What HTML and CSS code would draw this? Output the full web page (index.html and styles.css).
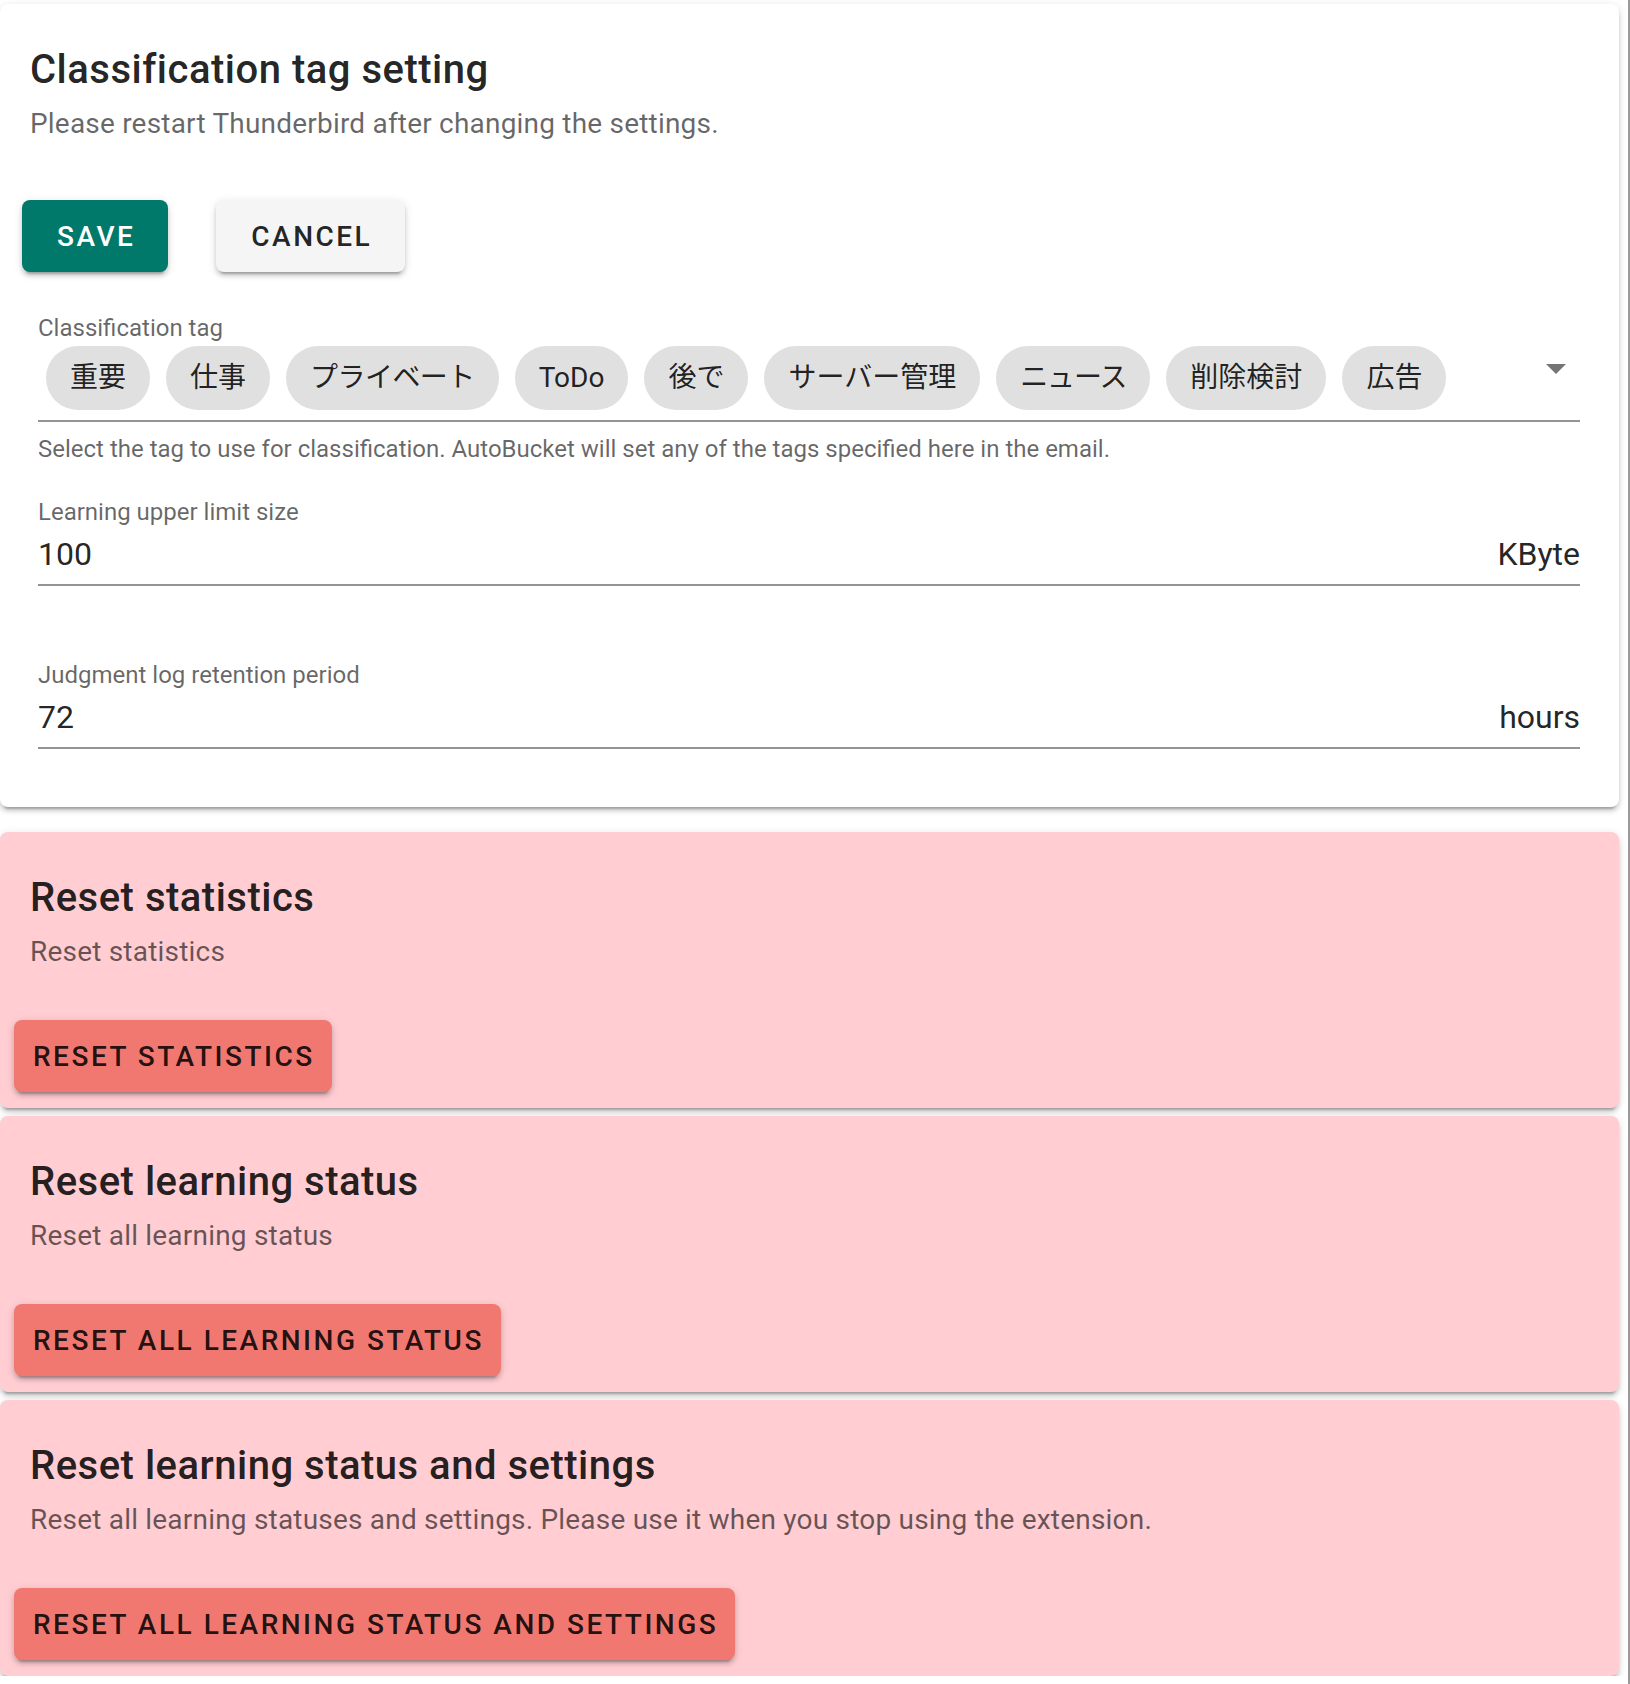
FILE: index.html
```html
<!DOCTYPE html>
<html lang="en">
<head>
<meta charset="utf-8">
<title>AutoBucket settings</title>
<link rel="stylesheet" href="styles.css">
</head>
<body>
<main class="page">
  <section class="card card-main">
    <h2 class="card-title">Classification tag setting</h2>
    <p class="card-subtitle">Please restart Thunderbird after changing the settings.</p>
    <div class="actions actions-main">
      <button class="btn btn-save">Save</button>
      <button class="btn btn-cancel">Cancel</button>
    </div>
    <div class="fields">
      <div class="field field-select">
        <label class="field-label">Classification tag</label>
        <div class="select-row">
          <div class="chips">
            <span class="chip">重要</span>
            <span class="chip">仕事</span>
            <span class="chip chip-kana">プライベート</span>
            <span class="chip">ToDo</span>
            <span class="chip">後で</span>
            <span class="chip">サーバー管理</span>
            <span class="chip chip-kana-tight">ニュース</span>
            <span class="chip">削除検討</span>
            <span class="chip">広告</span>
          </div>
          <svg class="arrow" width="48" height="48" viewBox="0 0 24 24"><path d="M7 10l5 5 5-5z"/></svg>
        </div>
        <div class="underline"></div>
        <p class="hint">Select the tag to use for classification. AutoBucket will set any of the tags specified here in the email.</p>
      </div>
      <div class="field field-text field-first">
        <label class="field-label">Learning upper limit size</label>
        <div class="value-row"><span class="value">100</span><span class="suffix">KByte</span></div>
        <div class="underline"></div>
      </div>
      <div class="field field-text field-second">
        <label class="field-label">Judgment log retention period</label>
        <div class="value-row"><span class="value">72</span><span class="suffix">hours</span></div>
        <div class="underline"></div>
      </div>
    </div>
  </section>

  <section class="card card-danger card-danger-first">
    <h2 class="card-title">Reset statistics</h2>
    <p class="card-subtitle danger-sub">Reset statistics</p>
    <div class="actions actions-danger">
      <button class="btn btn-danger">Reset statistics</button>
    </div>
  </section>

  <section class="card card-danger">
    <h2 class="card-title">Reset learning status</h2>
    <p class="card-subtitle danger-sub">Reset all learning status</p>
    <div class="actions actions-danger">
      <button class="btn btn-danger">Reset all learning status</button>
    </div>
  </section>

  <section class="card card-danger">
    <h2 class="card-title">Reset learning status and settings</h2>
    <p class="card-subtitle danger-sub">Reset all learning statuses and settings. Please use it when you stop using the extension.</p>
    <div class="actions actions-danger">
      <button class="btn btn-danger">Reset all learning status and settings</button>
    </div>
  </section>
</main>
</body>
</html>
```
FILE: styles.css
```css
html, body {
  margin: 0;
  padding: 0;
  background: #ffffff;
}
body {
  font-family: Roboto, "Noto Sans CJK JP", sans-serif;
  color: rgba(0, 0, 0, 0.87);
}
body::after {
  content: "";
  position: fixed;
  top: 0;
  bottom: 0;
  right: 0;
  width: 2px;
  background: #9a9a9a;
}
.page {
  width: 1619px;
  padding-top: 4px;
  display: flex;
  flex-direction: column;
}
.card {
  border-radius: 8px;
  background: #ffffff;
  box-shadow: 0 6px 2px -4px rgba(0,0,0,0.2), 0 4px 4px 0 rgba(0,0,0,0.14), 0 2px 10px 0 rgba(0,0,0,0.12);
  display: flex;
  flex-direction: column;
}
.card-title {
  margin: 0;
  padding: 34px 30px 0;
  font-size: 40px;
  line-height: 64px;
  font-weight: 500;
  letter-spacing: 0.5px;
  color: rgba(0, 0, 0, 0.87);
}
.card-subtitle {
  margin: 0;
  padding: 0 30px;
  font-size: 28px;
  line-height: 44px;
  font-weight: 400;
  letter-spacing: 0.2px;
  color: rgba(0, 0, 0, 0.6);
}
.actions {
  display: flex;
  align-items: center;
}
.actions-main {
  padding: 54px 22px 0;
  gap: 48px;
}
.btn {
  height: 72px;
  border: 0;
  border-radius: 8px;
  font-family: Roboto, sans-serif;
  font-size: 28px;
  font-weight: 500;
  letter-spacing: 2.5px;
  text-transform: uppercase;
  box-shadow: 0 6px 2px -4px rgba(0,0,0,0.2), 0 4px 4px 0 rgba(0,0,0,0.14), 0 2px 10px 0 rgba(0,0,0,0.12);
  cursor: pointer;
}
.btn-save {
  padding: 0 33px 0 35px;
  background: #00796b;
  color: #ffffff;
}
.btn-cancel {
  padding: 0 33px 0 35px;
  background: #f5f5f5;
  color: rgba(0, 0, 0, 0.87);
}
.fields {
  padding: 44px 39px 58px 38px;
  display: flex;
  flex-direction: column;
}
.field {
  display: flex;
  flex-direction: column;
}
.field-label {
  font-size: 24px;
  line-height: 24px;
  color: rgba(0, 0, 0, 0.6);
}
.select-row {
  display: flex;
  align-items: flex-start;
  margin-top: 6px;
  padding-bottom: 10px;
}
.chips {
  flex: 1;
  display: flex;
  gap: 16px;
  padding-left: 8px;
}
.chip {
  height: 64px;
  padding: 0 24px;
  border-radius: 32px;
  background: #e0e0e0;
  font-size: 28px;
  line-height: 64px;
  color: rgba(0, 0, 0, 0.87);
  white-space: nowrap;
}
.chip-kana {
  letter-spacing: -0.55px;
}
.chip-kana-tight {
  letter-spacing: -1.1px;
}
.arrow {
  flex: none;
  margin-top: -2px;
  margin-right: 0;
  fill: rgba(0, 0, 0, 0.54);
}
.underline {
  height: 2px;
  background: rgba(0, 0, 0, 0.42);
}
.hint {
  margin: 15px 0 0;
  font-size: 24px;
  line-height: 24px;
  color: rgba(0, 0, 0, 0.6);
}
.field-first {
  margin-top: 39px;
}
.field-second {
  margin-top: 77px;
}
.value-row {
  display: flex;
  justify-content: space-between;
  margin-top: 10px;
  padding-bottom: 10px;
  font-size: 32px;
  line-height: 40px;
}
.value, .suffix {
  color: rgba(0, 0, 0, 0.87);
}
.card-danger {
  background: #ffcdd2;
  margin-top: 8px;
}
.card-danger-first {
  margin-top: 25px;
}
.danger-sub {
  padding-bottom: 30px;
}
.actions-danger {
  padding: 16px 14px;
}
.btn-danger {
  padding: 0 17px 0 19px;
  background: #f07870;
  color: rgba(0, 0, 0, 0.87);
}
```
